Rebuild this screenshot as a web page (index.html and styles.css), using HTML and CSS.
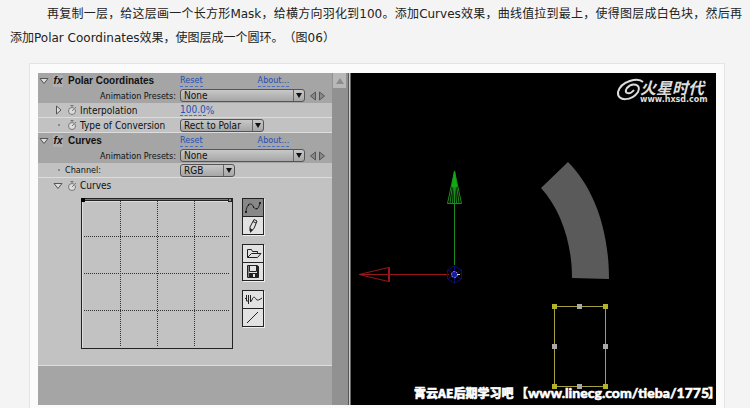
FILE: index.html
```html
<!DOCTYPE html>
<html lang="zh-CN">
  <head>
    <meta charset="UTF-8" />
    <meta name="viewport" content="width=device-width, initial-scale=1.0" />
    <title>Polar Coordinates</title>
    <link rel="stylesheet" href="styles.css">
  </head>
  <body>
    <p class="article-text">再复制一层，给这层画一个长方形Mask，给横方向羽化到100。添加Curves效果，曲线值拉到最上，使得图层成白色块，然后再添加Polar Coordinates效果，使图层成一个圆环。（图06）</p>

    <div class="figure">
      <!-- Effect controls -->
      <div class="effects">
        <div class="effect-head">
          <div class="row">
            <svg class="twirl" viewBox="0 0 10 8"><path d="M1 1.5H9L5 6.5Z" /></svg>
            <span class="fx">fx</span>
            <h2 class="effect-name">Polar Coordinates</h2>
            <a class="link" href="#">Reset</a>
            <a class="link about" href="#">About...</a>
          </div>
          <div class="row">
            <label class="preset-label" for="preset1">Animation Presets:</label>
            <span class="drop wide"><select id="preset1"><option>None</option></select></span>
            <button class="step" aria-label="Previous preset"><svg viewBox="0 0 8 10"><path d="M6.5 1V9L1.5 5Z" /></svg></button>
            <button class="step" aria-label="Next preset"><svg viewBox="0 0 8 10"><path d="M1.5 1V9L6.5 5Z" /></svg></button>
          </div>
        </div>
        <div class="row prop">
          <svg class="twirl-side" viewBox="0 0 8 10"><path d="M1.5 1V9L6 5Z" /></svg>
          <svg class="watch" viewBox="0 0 10 10"><circle cx="5" cy="6" r="3.5" /><path d="M5 2V.5M3.5.5H6.5M5 6L7 4M8 2L9 3" /></svg>
          <span class="prop-name">Interpolation</span>
          <a class="link" href="#">100.0</a><span class="unit">%</span>
        </div>
        <div class="row prop">
          <span class="dot"></span>
          <svg class="watch" viewBox="0 0 10 10"><circle cx="5" cy="6" r="3.5" /><path d="M5 2V.5M3.5.5H6.5M5 6L7 4M8 2L9 3" /></svg>
          <label class="prop-name" for="conversion">Type of Conversion</label>
          <span class="drop medium"><select id="conversion"><option>Rect to Polar</option></select></span>
        </div>

        <div class="effect-head">
          <div class="row">
            <svg class="twirl" viewBox="0 0 10 8"><path d="M1 1.5H9L5 6.5Z" /></svg>
            <span class="fx">fx</span>
            <h2 class="effect-name">Curves</h2>
            <a class="link" href="#">Reset</a>
            <a class="link about" href="#">About...</a>
          </div>
          <div class="row">
            <label class="preset-label" for="preset2">Animation Presets:</label>
            <span class="drop wide"><select id="preset2"><option>None</option></select></span>
            <button class="step" aria-label="Previous preset"><svg viewBox="0 0 8 10"><path d="M6.5 1V9L1.5 5Z" /></svg></button>
            <button class="step" aria-label="Next preset"><svg viewBox="0 0 8 10"><path d="M1.5 1V9L6.5 5Z" /></svg></button>
          </div>
        </div>
        <div class="row prop">
          <span class="dot"></span>
          <label class="channel-name" for="channel">Channel:</label>
          <span class="drop small"><select id="channel"><option>RGB</option></select></span>
        </div>
        <div class="row">
          <svg class="twirl inner" viewBox="0 0 10 8"><path d="M1 1.5H9L5 6.5Z" /></svg>
          <svg class="watch" viewBox="0 0 10 10"><circle cx="5" cy="6" r="3.5" /><path d="M5 2V.5M3.5.5H6.5M5 6L7 4M8 2L9 3" /></svg>
          <span class="prop-name">Curves</span>
        </div>

        <div class="curves">
          <svg class="graph" viewBox="0 0 152 152">
            <path class="graph-light" d="M1.5 150V3.5H149" />
            <path class="graph-bar" d="M2 1.5H150" />
            <path d="M2 2.5H150" />
            <rect class="graph-frame" x=".5" y=".5" width="151" height="150" />
            <path class="graph-grid" d="M39.5 3V149M76.5 3V149M113.5 3V149M3 38.5H149M3 75.5H149M3 112.5H149" />
            <rect x="0" y="0" width="4" height="4" />
            <rect class="graph-point" x="147.5" y=".5" width="3" height="3" />
          </svg>
          <div class="tools">
            <div class="tool-pair">
              <button class="tool active" aria-label="Curve"><svg viewBox="0 0 20 17"><path d="M3 12C4 5 8 3 10 7S15 12 17 4" /><path class="solid" d="M2 12h2v2H2zM5 5h1v2H5zM10 7h1v2h-1zM13 9h2v1h-2zM16 3h2v2h-2z" /></svg></button>
              <button class="tool" aria-label="Pencil"><svg viewBox="0 0 20 17"><path d="M7 14V10L11 2.5L14 4L11 11.5L7 15M10 4.5L13 6" /><path class="solid" d="M7 11L10 13L7 16Z" /></svg></button>
            </div>
            <div class="tool-pair">
              <button class="tool" aria-label="Open"><svg viewBox="0 0 20 17"><path d="M4.5 12.5V4.5H8.5L9.5 6.5H14.5V8.5M4.5 12.5L8.5 8.5H18L14.5 12.5Z" /></svg></button>
              <button class="tool" aria-label="Save"><svg viewBox="0 0 20 17"><path d="M4.5 2.5H14.5L15.5 3.5V14.5H4.5ZM6.5 3V8.5H13.5V3" /><path class="solid" d="M4 3h1.5v11H4zM14 3h1.5v11h-1.5zM6 10h8v4h-2v-3h-2v3H6z" /></svg></button>
            </div>
            <div class="tool-pair">
              <button class="tool" aria-label="Smooth"><svg viewBox="0 0 20 17"><path d="M2 7.5H3.5V4V10H5.5V13V4M7.5 4V11L9 9C10 5 12 6 13 8S16 9 19 7" /></svg></button>
              <button class="tool" aria-label="Line"><svg viewBox="0 0 20 17"><path d="M4 14L15 3" /></svg></button>
            </div>
          </div>
        </div>
      </div>

      <div class="scrollbar"><span class="scroll-up"></span></div>
      <div class="divider"></div>

      <!-- Composition view -->
      <svg class="comp" viewBox="0 0 365 332">
        <path class="ring" d="M190 115L217 89C243 115 258 157 258 206L221 205C221 170 210 137 190 115Z" />

        <g class="axis-y">
          <path d="M103.5 98V192M103.5 98L96.5 130.5H110.5ZM103.5 98L99 130M103.5 98L101.5 130M103.5 98L105.5 130M103.5 98L108 130" />
          <path class="tip" d="M103.5 98L100.5 114H106.5Z" />
        </g>
        <path class="axis-x" d="M98 201.5H8L37.5 194.5V208.5L8 201.5M38.5 194V209" />
        <g class="axis-z">
          <path d="M103.5 193L110.5 197V206L103.5 210L96.5 206V197ZM97 197L110 206M110 197L97 206M103.5 193V210" />
          <circle cx="103.5" cy="201.5" r="3" />
          <path class="cross" d="M106 201.5H109" />
        </g>

        <rect class="mask" x="203.5" y="233.5" width="51" height="80" />
        <path class="handle" d="M226 231h5v5h-5zM201 271h5v5h-5zM252 271h5v5h-5zM226 311h5v5h-5z" />
        <path class="corner" d="M201 231h5v5h-5zM252 231h5v5h-5zM201 311h5v5h-5zM252 311h5v5h-5z" />

        <g class="logo">
          <path d="M292 9C287 4 270 8 267 19C266 29 281 28 287 19C291 11 281 9 276 15C272 21 279 22 283 17" />
          <text class="logo-name" x="289" y="21">火星时代</text>
          <text class="logo-site" x="289" y="29">www.hxsd.com</text>
        </g>
        <text class="caption" x="63" y="325">霄云AE后期学习吧</text>
        <text class="caption" x="165" y="325">【</text>
        <text class="caption latin" x="177" y="325">www.linecg.com/tieba/1775</text>
        <text class="caption" x="357" y="325">】</text>
      </svg>
    </div>
  </body>
</html>
```

FILE: styles.css
```css
body {
  margin: 0;
  background-color: #f4f4f4;
  color: #222;
}

/* Article paragraph */
.article-text {
  margin: 0;
  padding: 2px 8px 13px 10px;
  font-family: "DejaVu Sans", "Noto Sans CJK SC", sans-serif;
  font-size: 12px;
  line-height: 24px;
  text-indent: 37px;
  text-align: justify;
  text-spacing-trim: space-all;
}

/* Framed picture */
.figure {
  display: grid;
  grid-template-columns: 294fr 16px 3px 365fr;
  margin: 0 25px 0 29px;
  padding: 9px 8px 3px;
  border: 1px solid #e4e4e4;
  border-bottom: 0;
  background-color: #fbfbfb;
}

/* Effect controls panel */
.effects {
  background-color: #a5a5a5;
  font-family: "DejaVu Sans Condensed", "DejaVu Sans", sans-serif;
  font-size: 9px;
  color: #111;
}

.row {
  display: flex;
  align-items: center;
  box-sizing: border-box;
  height: 15px;
  background-color: #c2c2c2;
}

.effect-head .row {
  background-color: #a5a5a5;
}

.prop {
  border-bottom: 1px solid #dcdcdc;
}

.twirl {
  width: 10px;
  height: 8px;
  margin-left: 1px;
}

.twirl.inner {
  margin-left: 15px;
  margin-right: 4px;
}

.twirl path,
.twirl-side path {
  fill: #ddd;
  stroke: #555;
}

.twirl-side {
  width: 8px;
  height: 10px;
  margin-left: 17px;
  margin-right: 4px;
}

.fx {
  width: 10px;
  margin-left: 4px;
  font: italic bold 10px/12px "Liberation Sans", sans-serif;
  text-align: center;
  background-color: #b0b0b0;
}

.effect-name {
  width: 112px;
  margin: 0 0 0 5px;
  font: bold 10px/14px "Liberation Sans", sans-serif;
}

.link {
  line-height: 11px;
  color: #2450b4;
  text-decoration: none;
  border-bottom: 1px dashed #4c70c0;
}

.about {
  margin-left: 55px;
}

.prop .link,
.unit {
  font-size: 10px;
  color: #2450b4;
}

.preset-label {
  width: 138px;
  margin-right: 4px;
  text-align: right;
}

.watch {
  width: 10px;
  height: 10px;
  margin-right: 3px;
}

.watch circle,
.watch path {
  fill: #ddd;
  stroke: #777;
}

.prop-name {
  width: 100px;
  font-size: 10px;
}

.channel-name {
  width: 115px;
  margin-left: -2px;
}

.dot {
  width: 2px;
  height: 2px;
  margin-left: 20px;
  margin-right: 7px;
  background-color: #8a8a8a;
}

/* Drop-downs */
.drop {
  position: relative;
  height: 13px;
}

.drop select {
  display: block;
  width: 100%;
  height: 13px;
  padding: 0 3px;
  border: 1px solid #555;
  border-radius: 3px;
  appearance: none;
  background: linear-gradient(#c8c8c8, #a6a6a6);
  font: inherit;
  font-size: 10px;
  line-height: 11px;
  color: #111;
}

.drop::before {
  content: "";
  position: absolute;
  top: 1px;
  right: 11px;
  bottom: 1px;
  border-left: 1px solid #666;
}

.drop::after {
  content: "";
  position: absolute;
  top: 4px;
  right: 3px;
  border: 3px solid transparent;
  border-top: 5px solid #111;
  border-bottom: 0;
}

.wide {
  width: 125px;
  margin-right: 4px;
}

.medium {
  width: 84px;
}

.small {
  width: 55px;
}

.step {
  width: 9px;
  height: 12px;
  padding: 0;
  border: 0;
  background: none;
}

.step svg {
  display: block;
  width: 8px;
  height: 10px;
}

.step path {
  fill: #888;
  stroke: #555;
}

/* Curve editor */
.curves {
  display: flex;
  gap: 9px;
  padding: 5px 0 15px 43px;
  border-bottom: 1px solid #ddd;
  background-color: #c2c2c2;
}

.graph {
  width: 152px;
  height: 152px;
}

.graph path,
.graph-frame {
  fill: none;
  stroke: #222;
}

.graph .graph-light {
  stroke: #ddd;
}

.graph .graph-bar {
  stroke: #777;
}

.graph .graph-grid {
  stroke: #333;
  stroke-dasharray: 1 1;
}

.graph-point {
  fill: #888;
  stroke: #222;
}

.tools {
  display: flex;
  flex-direction: column;
  gap: 9px;
}

.tool-pair {
  border: 1px solid #222;
  box-shadow: 1px 1px 0 #eee;
}

.tool {
  display: block;
  width: 20px;
  height: 17px;
  padding: 0;
  border: 0;
  background-color: #e2e2e2;
}

.tool + .tool {
  height: 18px;
  border-top: 1px solid #222;
}

.tool.active {
  background-color: #888;
}

.tool svg {
  display: block;
  width: 20px;
  height: 17px;
}

.tool path {
  fill: none;
  stroke: #222;
}

.tool .solid {
  fill: #222;
  stroke: none;
}

/* Scrollbar between the panels */
.scrollbar {
  background-color: #919191;
}

.scroll-up {
  display: flex;
  align-items: center;
  justify-content: center;
  height: 15px;
  margin: 0 2px 0 1px;
  background-color: #b8b8b8;
}

.scroll-up::before {
  content: "";
  border: 4px solid transparent;
  border-bottom: 6px solid #8c8c8c;
  border-top: 0;
}

.divider {
  border-left: 1px solid #555;
  border-right: 1px solid #666;
  background-color: #d0d0c8;
}

/* Composition view */
.comp {
  display: block;
  width: 100%;
  overflow: visible;
  background-color: #000;
}

.ring {
  fill: #5a5a5a;
}

.axis-y path {
  fill: none;
  stroke: #1f8a1f;
}

.axis-y .tip {
  fill: #12a812;
  stroke: none;
}

.axis-x {
  fill: none;
  stroke: #961818;
}

.axis-z path {
  fill: none;
  stroke: #0c0c78;
}

.axis-z circle {
  fill: #1818a0;
  stroke: #9a9ae0;
  stroke-dasharray: 2 1;
}

.axis-z .cross {
  stroke: #ddd;
}

.mask {
  fill: none;
  stroke: #a8a040;
}

.handle {
  fill: #aaa;
}

.corner {
  fill: #b4b42c;
}

.logo path {
  fill: none;
  stroke: #ddd;
  stroke-width: 2px;
}

.logo text {
  fill: #ddd;
}

.logo-name {
  font: italic bold 16px "Noto Sans CJK SC", sans-serif;
}

.logo-site {
  font: bold 8px "DejaVu Sans", sans-serif;
}

.caption {
  fill: #fff;
  stroke: #fff;
  stroke-width: 0.5px;
  font: 900 12px "Noto Sans CJK SC", sans-serif;
}

.latin {
  font: 900 14px Lato, sans-serif;
}
```
